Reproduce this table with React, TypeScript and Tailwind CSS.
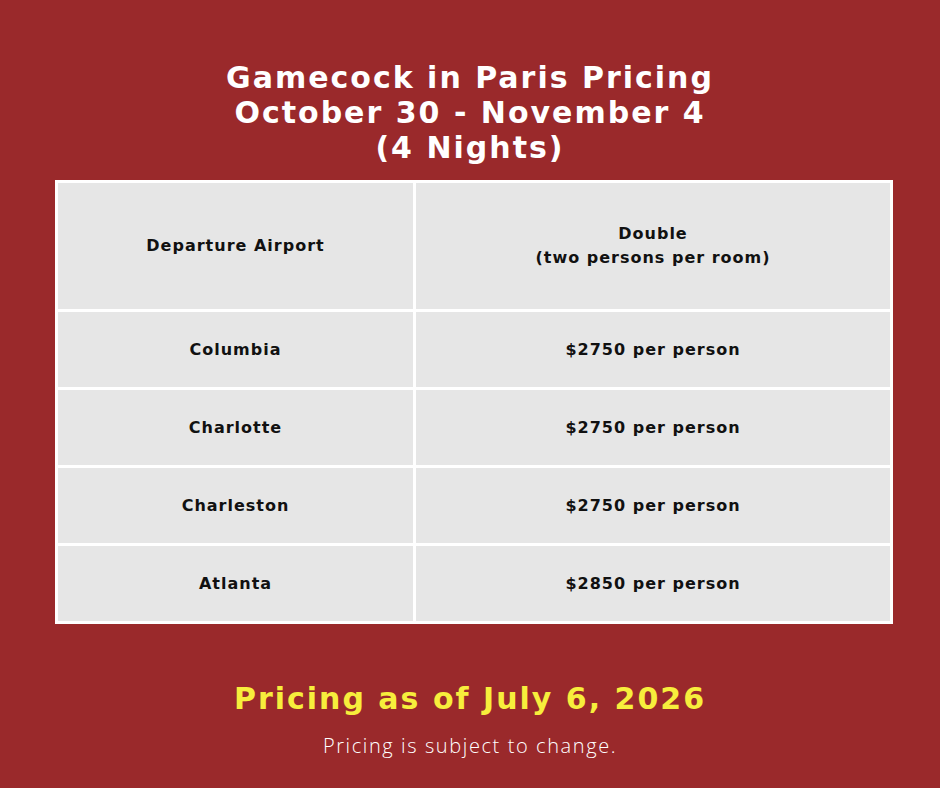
const rows = [
  { city: 'Columbia', price: '$2750 per person' },
  { city: 'Charlotte', price: '$2750 per person' },
  { city: 'Charleston', price: '$2750 per person' },
  { city: 'Atlanta', price: '$2850 per person' },
];

const cell =
  'flex flex-col items-center justify-center bg-[#e6e6e6] text-center text-[16px] font-semibold tracking-[1px] text-[#111111]';

export default function App() {
  return (
    <div className="flex h-[788px] w-[940px] flex-col items-center bg-[#9a292b] font-['DejaVu_Sans',sans-serif]">
      {/* Title */}
      <h1 className="mt-[60px] text-center text-[30px] font-bold leading-[35px] tracking-[2px] text-white">
        <span className="block">Gamecock in Paris Pricing</span>
        <span className="block">October 30 - November 4</span>
        <span className="block">(4 Nights)</span>
      </h1>

      {/* Pricing table */}
      <div className="mt-[15px] ml-2 grid w-[838px] grid-cols-[355px_474px] grid-rows-[126px_75px_75px_75px_75px] gap-[3px] bg-white p-[3px]">
        <div className={cell}>Departure Airport</div>
        <div className={cell}>
          <span>Double</span>
          <span>(two persons per room)</span>
        </div>
        {rows.map((r) => (
          <>
            <div key={r.city} className={cell}>
              {r.city}
            </div>
            <div key={r.city + '-p'} className={cell}>
              {r.price}
            </div>
          </>
        ))}
      </div>

      {/* Footer */}
      <p className="mt-[55px] text-[30px] font-bold leading-[40px] tracking-[2px] text-[#f7ee3c]">
        Pricing as of July 6, 2026
      </p>
      <p className="mt-[15px] font-['Open_Sans',sans-serif] text-[20px] font-light leading-[24px] tracking-[1.6px] text-white">
        Pricing is subject to change.
      </p>
    </div>
  );
}
